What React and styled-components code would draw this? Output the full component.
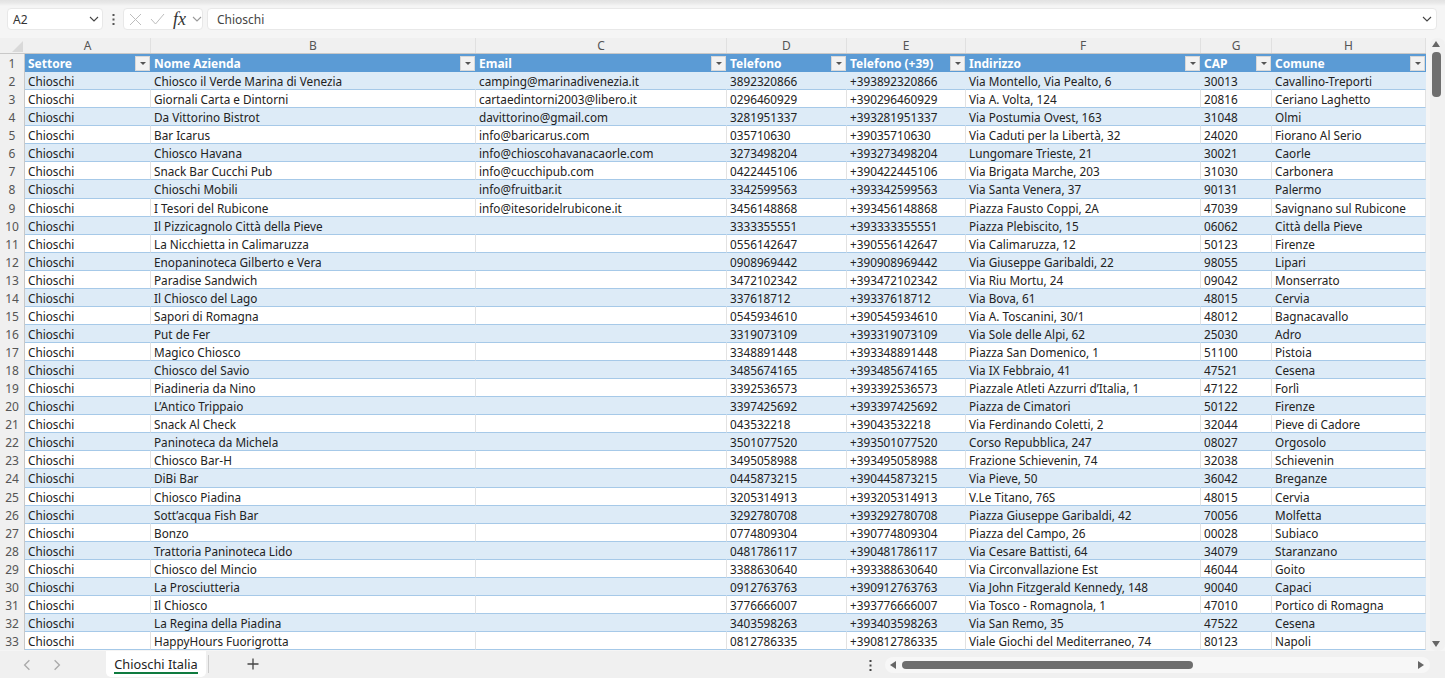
import React from "react";
import styled, { createGlobalStyle } from "styled-components";

const Global = createGlobalStyle`
  html, body { margin: 0; padding: 0; background: #f5f5f5; overflow: hidden; }
  * { box-sizing: border-box; }
`;

const FONT = `"Noto Sans", "Open Sans", sans-serif`;
const COLS = "25px 126px 325px 251px 120px 119px 235px 71px 154px";

const Page = styled.div`
  width: 1445px; height: 678px; display: flex; flex-direction: column;
  background: #f5f5f5; font-family: ${FONT}; color: #222; overflow: hidden;
`;
const TopEdge = styled.div`
  height: 8px; flex: none;
  background: linear-gradient(#e2e2e2 0, #e9e9e9 3px, #f5f5f5 6px);
`;
const FormulaBar = styled.div`
  height: 22px; flex: none; display: flex; align-items: stretch; padding: 0 8px 0 7px;
`;
const Field = styled.div`
  background: #fff; border: 1px solid #e8e8e8; border-radius: 4px;
  display: flex; align-items: center;
`;
const NameBox = styled(Field)`
  width: 96px; padding: 0 3px 0 5px; justify-content: space-between; font-size: 12px; color: #333;
`;
const Dots = styled.div`
  width: 20px; display: flex; align-items: center; justify-content: center; color: #555;
`;
const FxBox = styled(Field)`
  width: 80px; padding: 0 0 0 5px; gap: 8px;
`;
const FxText = styled.span`
  font-family: "Liberation Serif", serif; font-style: italic; font-size: 18px; line-height: 18px; color: #333;
  width: 14px; margin-right: -3px;
`;
const FormulaInput = styled(Field)`
  flex: 1; margin-left: 4px; padding: 0 4px 0 9px; justify-content: space-between; font-size: 12px; color: #444;
`;
const SheetArea = styled.div`
  flex: none; height: 613px; margin-top: 8px; display: flex; align-items: flex-start;
`;
const Grid = styled.div`
  width: 1426px; flex: none; background: #fff;
`;
const ColHeadRow = styled.div`
  display: grid; grid-template-columns: ${COLS}; height: 16px; background: #f0f0f0;
  border-bottom: 1px solid #c8c8c8;
`;
const ColHead = styled.div`
  display: flex; align-items: center; justify-content: center; font-size: 12px; color: #555;
  border-right: 1px solid #e0e0e0; height: 15px;
`;
const Corner = styled.div`
  position: relative; height: 15px; background: #f0f0f0;
  &::after {
    content: ""; position: absolute; right: 2px; bottom: 1px; width: 0; height: 0;
    border-style: solid; border-width: 0 0 11px 11px; border-color: transparent transparent #d9d9d9 transparent;
  }
`;
const Row = styled.div`
  display: grid; grid-template-columns: ${COLS}; height: 18.0625px;
`;
const RowHead = styled.div`
  background: #f0f0f0; color: #555; font-size: 12px; display: flex; align-items: center; justify-content: center;
  border-right: 1px solid #c8c8c8; padding-top: 1px;
`;
const HeaderCell = styled.div`
  background: #5b9bd5; color: #fff; font-weight: 700; font-size: 12px; padding: 1px 1px 0 3px;
  display: flex; align-items: center; justify-content: space-between;
  white-space: nowrap; overflow: hidden;
`;
const FilterBtn = styled.span`
  width: 15px; height: 15px; background: #f2f2f2; border: 1px solid #d8d8d8; flex: none; margin-top: -1px;
  display: flex; align-items: center; justify-content: center;
  &::after {
    content: ""; border-style: solid; border-width: 3px 3px 0 3px; border-color: #555 transparent transparent transparent;
  }
`;
const Cell = styled.div`
  background: ${(p) => (p.$stripe ? "#ddebf7" : "#fff")};
  border-bottom: 1px solid #a6c9e8;
  border-right: 1px solid ${(p) => (p.$stripe ? "#ddebf7" : "#e2e2e2")};
  font-size: 11.75px; line-height: 17px; padding: 1px 0 0 3px; color: #222; white-space: nowrap; overflow: hidden;
`;
const VScroll = styled.div`
  width: 15px; margin-left: 4px; height: 613px; position: relative; background: #f1f1f1; border-radius: 7px;
`;
const ThumbV = styled.div`
  position: absolute; top: 14px; left: 2px; width: 9px; height: 45px; background: #6e6e6e; border-radius: 4px;
`;
const ArrowUp = styled.div`
  position: absolute; top: 3px; left: 2px; width: 0; height: 0; border-style: solid;
  border-width: 0 4.5px 6px 4.5px; border-color: transparent transparent #666 transparent;
`;
const ArrowDown = styled.div`
  position: absolute; bottom: 4px; left: 2px; width: 0; height: 0; border-style: solid;
  border-width: 6px 4.5px 0 4.5px; border-color: #666 transparent transparent transparent;
`;
const Footer = styled.div`
  flex: none; height: 27px; display: flex; align-items: flex-start; background: #f0f0f0; position: relative;
`;
const NavArrows = styled.div`
  width: 106px; display: flex; align-items: center; gap: 18px; padding: 8px 0 0 21px; color: #aaa;
`;
const SheetTab = styled.div`
  width: 100px; height: 26px; background: #fff; border-radius: 0 0 5px 5px; display: flex; align-items: center;
  justify-content: center; font-size: 12.75px; color: #222; position: relative;
  &::after {
    content: ""; position: absolute; left: 8px; right: 8px; bottom: 3px; height: 2px; background: #0f7b3f;
  }
`;
const TabSep = styled.div`
  width: 1px; height: 18px; background: #ccc; margin: 4px 0 0 2px;
`;
const AddBtn = styled.div`
  margin: 7px 0 0 38px; color: #444; display: flex;
`;
const Spacer = styled.div`flex: 1;`;
const FootDots = styled.div`
  width: 16px; margin-top: 9px; margin-right: 7px; display: flex; justify-content: center; color: #444;
`;
const HScroll = styled.div`
  width: 545px; height: 16px; margin: 6px 15px 0 0; background: #f7f7f7; border-radius: 8px; position: relative;
`;
const ThumbH = styled.div`
  position: absolute; left: 17px; top: 4px; width: 291px; height: 8px; background: #6e6e6e; border-radius: 4px;
`;
const ArrowL = styled.div`
  position: absolute; left: 5px; top: 4px; width: 0; height: 0; border-style: solid;
  border-width: 4px 6px 4px 0; border-color: transparent #666 transparent transparent;
`;
const ArrowR = styled.div`
  position: absolute; right: 6px; top: 4px; width: 0; height: 0; border-style: solid;
  border-width: 4px 0 4px 6px; border-color: transparent transparent transparent #666;
`;

const Chevron = ({ dir = "down", c = "#555", s = 10 }) => {
  const d = { down: "M1 3l4 4 4-4", left: "M7 1L3 5l4 4", right: "M3 1l4 4-4 4" }[dir];
  return (
    <svg width={s} height={s} viewBox="0 0 10 10" fill="none" stroke={c} strokeWidth="1.1"><path d={d} /></svg>
  );
};
const VDots = () => (
  <svg width="3" height="11" viewBox="0 0 3 11" fill="currentColor">
    <rect x="0.5" y="0" width="2" height="2" /><rect x="0.5" y="4.5" width="2" height="2" /><rect x="0.5" y="9" width="2" height="2" />
  </svg>
);
const Cross = () => (
  <svg width="13" height="13" viewBox="0 0 13 13" stroke="#bdbdbd" strokeWidth="1" fill="none"><path d="M1 1l11 11M12 1L1 12" /></svg>
);
const Check = () => (
  <svg width="15" height="12" viewBox="0 0 15 12" stroke="#bdbdbd" strokeWidth="1" fill="none"><path d="M1 6l4.5 5L14 1" /></svg>
);
const Plus = () => (
  <svg width="12" height="12" viewBox="0 0 12 12" stroke="#444" strokeWidth="1.3" fill="none"><path d="M6 0.5v11M0.5 6h11" /></svg>
);

const cols = ["A", "B", "C", "D", "E", "F", "G", "H"];
const heads = ["Settore", "Nome Azienda", "Email", "Telefono", "Telefono (+39)", "Indirizzo", "CAP", "Comune"];
const data = [
  ["Chiosco il Verde Marina di Venezia", "camping@marinadivenezia.it", "3892320866", "Via Montello, Via Pealto, 6", "30013", "Cavallino-Treporti"],
  ["Giornali Carta e Dintorni", "cartaedintorni2003@libero.it", "0296460929", "Via A. Volta, 124", "20816", "Ceriano Laghetto"],
  ["Da Vittorino Bistrot", "davittorino@gmail.com", "3281951337", "Via Postumia Ovest, 163", "31048", "Olmi"],
  ["Bar Icarus", "info@baricarus.com", "035710630", "Via Caduti per la Libertà, 32", "24020", "Fiorano Al Serio"],
  ["Chiosco Havana", "info@chioscohavanacaorle.com", "3273498204", "Lungomare Trieste, 21", "30021", "Caorle"],
  ["Snack Bar Cucchi Pub", "info@cucchipub.com", "0422445106", "Via Brigata Marche, 203", "31030", "Carbonera"],
  ["Chioschi Mobili", "info@fruitbar.it", "3342599563", "Via Santa Venera, 37", "90131", "Palermo"],
  ["I Tesori del Rubicone", "info@itesoridelrubicone.it", "3456148868", "Piazza Fausto Coppi, 2A", "47039", "Savignano sul Rubicone"],
  ["Il Pizzicagnolo Città della Pieve", "", "3333355551", "Piazza Plebiscito, 15", "06062", "Città della Pieve"],
  ["La Nicchietta in Calimaruzza", "", "0556142647", "Via Calimaruzza, 12", "50123", "Firenze"],
  ["Enopaninoteca Gilberto e Vera", "", "0908969442", "Via Giuseppe Garibaldi, 22", "98055", "Lipari"],
  ["Paradise Sandwich", "", "3472102342", "Via Riu Mortu, 24", "09042", "Monserrato"],
  ["Il Chiosco del Lago", "", "337618712", "Via Bova, 61", "48015", "Cervia"],
  ["Sapori di Romagna", "", "0545934610", "Via A. Toscanini, 30/1", "48012", "Bagnacavallo"],
  ["Put de Fer", "", "3319073109", "Via Sole delle Alpi, 62", "25030", "Adro"],
  ["Magico Chiosco", "", "3348891448", "Piazza San Domenico, 1", "51100", "Pistoia"],
  ["Chiosco del Savio", "", "3485674165", "Via IX Febbraio, 41", "47521", "Cesena"],
  ["Piadineria da Nino", "", "3392536573", "Piazzale Atleti Azzurri d’Italia, 1", "47122", "Forlì"],
  ["L’Antico Trippaio", "", "3397425692", "Piazza de Cimatori", "50122", "Firenze"],
  ["Snack Al Check", "", "043532218", "Via Ferdinando Coletti, 2", "32044", "Pieve di Cadore"],
  ["Paninoteca da Michela", "", "3501077520", "Corso Repubblica, 247", "08027", "Orgosolo"],
  ["Chiosco Bar-H", "", "3495058988", "Frazione Schievenin, 74", "32038", "Schievenin"],
  ["DiBi Bar", "", "0445873215", "Via Pieve, 50", "36042", "Breganze"],
  ["Chiosco Piadina", "", "3205314913", "V.Le Titano, 76S", "48015", "Cervia"],
  ["Sott’acqua Fish Bar", "", "3292780708", "Piazza Giuseppe Garibaldi, 42", "70056", "Molfetta"],
  ["Bonzo", "", "0774809304", "Piazza del Campo, 26", "00028", "Subiaco"],
  ["Trattoria Paninoteca Lido", "", "0481786117", "Via Cesare Battisti, 64", "34079", "Staranzano"],
  ["Chiosco del Mincio", "", "3388630640", "Via Circonvallazione Est", "46044", "Goito"],
  ["La Prosciutteria", "", "0912763763", "Via John Fitzgerald Kennedy, 148", "90040", "Capaci"],
  ["Il Chiosco", "", "3776666007", "Via Tosco - Romagnola, 1", "47010", "Portico di Romagna"],
  ["La Regina della Piadina", "", "3403598263", "Via San Remo, 35", "47522", "Cesena"],
  ["HappyHours Fuorigrotta", "", "0812786335", "Viale Giochi del Mediterraneo, 74", "80123", "Napoli"],
];

export default function App() {
  return (
    <Page>
      <Global />
      <TopEdge />
      <FormulaBar>
        <NameBox>A2<Chevron c="#444" /></NameBox>
        <Dots><VDots /></Dots>
        <FxBox><Cross /><Check /><FxText>fx</FxText><Chevron c="#999" /></FxBox>
        <FormulaInput>Chioschi<Chevron c="#444" /></FormulaInput>
      </FormulaBar>
      <SheetArea>
        <Grid>
          <ColHeadRow>
            <Corner />
            {cols.map((c) => <ColHead key={c}>{c}</ColHead>)}
          </ColHeadRow>
          <Row>
            <RowHead>1</RowHead>
            {heads.map((h) => <HeaderCell key={h}>{h}<FilterBtn /></HeaderCell>)}
          </Row>
          {data.map((d, i) => {
            const stripe = i % 2 === 0;
            const vals = ["Chioschi", d[0], d[1], d[2], "+39" + d[2], d[3], d[4], d[5]];
            return (
              <Row key={i}>
                <RowHead>{i + 2}</RowHead>
                {vals.map((v, j) => <Cell key={j} $stripe={stripe}>{v}</Cell>)}
              </Row>
            );
          })}
        </Grid>
        <VScroll><ArrowUp /><ThumbV /><ArrowDown /></VScroll>
      </SheetArea>
      <Footer>
        <NavArrows><Chevron dir="left" c="#aaa" s={12} /><Chevron dir="right" c="#aaa" s={12} /></NavArrows>
        <SheetTab>Chioschi Italia</SheetTab>
        <TabSep />
        <AddBtn><Plus /></AddBtn>
        <Spacer />
        <FootDots><VDots /></FootDots>
        <HScroll><ArrowL /><ThumbH /><ArrowR /></HScroll>
      </Footer>
    </Page>
  );
}
